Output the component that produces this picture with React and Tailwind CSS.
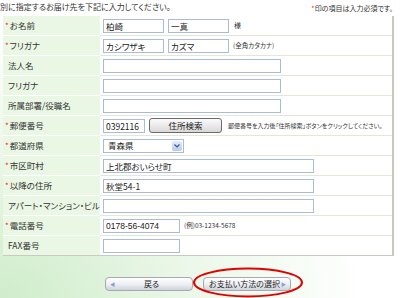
import React from 'react'

const jp = "font-['Noto_Sans_CJK_JP','Noto_Sans',sans-serif] [font-feature-settings:'palt']"

const Req = () => <span className="text-[#ff2020] text-[8px] leading-none mr-[1px]">*</span>

const Box = ({ w, value, className = '' }) => (
  <input
    readOnly
    value={value || ''}
    className={`h-[14px] border border-[#a9bcd6] bg-white px-[2px] text-[8.5px] text-[#222] outline-none ${w} ${className}`}
  />
)

const Row = ({ label, req, children, last }) => (
  <>
    <div
      className={`h-[20px] flex items-center pl-[2px] bg-[#e9f7e4] text-[8.5px] text-[#333] ${
        last ? 'border-b border-[#c9c9c0]' : 'border-b border-white'
      }`}
    >
      {req ? <Req /> : <span className="w-[3px]" />}
      <span className="whitespace-nowrap">{label}</span>
    </div>
    <div
      className={`h-[20px] flex items-center pl-[3px] bg-white ${
        last ? 'border-b border-[#c9c9c0]' : 'border-b border-[#e6e6d6]'
      }`}
    >
      {children}
    </div>
  </>
)

const Note = ({ children, className = '' }) => (
  <span className={`text-[6.5px] text-[#333] whitespace-nowrap ${className}`}>{children}</span>
)

const Btn = ({ children, dir }) => (
  <div className="w-[88px] h-[14px] rounded-[4px] border border-[#a8a8b0] bg-gradient-to-b from-[#ffffff] via-[#eef0f4] to-[#cfd3dc] flex items-center px-[4px] text-[8px] text-[#222]">
    {dir === 'left' && <span className="text-[5px] text-[#8aa0c8]">◀</span>}
    <span className="flex-1 text-center">{children}</span>
    {dir === 'right' && <span className="text-[5px] text-[#8aa0c8]">▶</span>}
  </div>
)

export default function App() {
  return (
    <div
      className={`relative w-[400px] h-[298px] overflow-hidden bg-[radial-gradient(ellipse_at_bottom_left,#cfeccb_0%,#eaf7e7_32%,#ffffff_65%)] ${jp}`}
    >
      {/* Header */}
      <div className="flex justify-between items-end h-[16px] pb-[3px] pr-[7px]">
        <span className="text-[8px] text-[#333]">別に指定するお届け先を下記に入力してください。</span>
        <span className="text-[7px] text-[#333]">
          <span className="text-[#ff2020]">*</span>印の項目は入力必須です。
        </span>
      </div>

      {/* Form table */}
      <div className="ml-[3px] w-[391px] grid grid-cols-[97px_1fr] border-r-2 border-[#c9c9c0]">
        <Row label="お名前" req>
          <Box w="w-[61px]" value="柏崎" />
          <Box w="w-[61px]" value="一真" className="ml-[4px]" />
          <Note className="ml-[5px] text-[7px]">様</Note>
        </Row>
        <Row label="フリガナ" req>
          <Box w="w-[61px]" value="カシワザキ" />
          <Box w="w-[61px]" value="カズマ" className="ml-[4px]" />
          <Note className="ml-[4px]">(全角カタカナ)</Note>
        </Row>
        <Row label="法人名">
          <Box w="w-[178px]" />
        </Row>
        <Row label="フリガナ">
          <Box w="w-[178px]" />
        </Row>
        <Row label="所属部署/役職名">
          <Box w="w-[178px]" />
        </Row>
        <Row label="郵便番号" req>
          <Box w="w-[42px]" value="0392116" />
          <div className="ml-[4px] w-[73px] h-[15px] rounded-[3px] border border-[#6b6b6b] bg-gradient-to-b from-[#fbfbfb] to-[#d9d9d9] flex items-center justify-center text-[8.5px] text-[#222]">
            住所検索
          </div>
          <span className="ml-[6px] text-[6px] text-[#333] whitespace-nowrap">
            郵便番号を入力後「住所検索」ボタンをクリックしてください。
          </span>
        </Row>
        <Row label="都道府県" req>
          <div className="w-[81px] h-[14px] border border-[#a9bcd6] bg-white flex items-center">
            <span className="flex-1 pl-[4px] text-[8.5px] text-[#222]">青森県</span>
            <span className="w-[10px] h-[10px] mr-[1px] rounded-[2px] bg-gradient-to-b from-[#e4ecf8] to-[#b8cbe8] flex items-center justify-center">
              <svg width="6" height="4" viewBox="0 0 6 4">
                <path d="M0.5 0.5 L3 3 L5.5 0.5" fill="none" stroke="#3a5a9a" strokeWidth="1.2" />
              </svg>
            </span>
          </div>
        </Row>
        <Row label="市区町村" req>
          <Box w="w-[211px]" value="上北郡おいらせ町" />
        </Row>
        <Row label="以降の住所" req>
          <Box w="w-[211px]" value="秋堂54-1" />
        </Row>
        <Row label="アパート・マンション・ビル">
          <Box w="w-[211px]" />
        </Row>
        <Row label="電話番号" req>
          <Box w="w-[77px]" value="0178-56-4074" className="font-['Liberation_Sans',sans-serif]" />
          <Note className="ml-[4px]">(例)03-1234-5678</Note>
        </Row>
        <Row label="FAX番号" last>
          <Box w="w-[77px]" />
        </Row>
      </div>

      {/* Buttons */}
      <div className="flex gap-[10px] ml-[105px] mt-[21px]">
        <Btn dir="left">戻る</Btn>
        <Btn dir="right">お支払い方法の選択</Btn>
      </div>

      {/* Highlight ellipse */}
      <svg className="absolute left-[192px] top-[267px]" width="112" height="31" viewBox="0 0 112 31">
        <ellipse cx="56" cy="15.5" rx="54" ry="14" fill="none" stroke="#e00000" strokeWidth="2" />
      </svg>
    </div>
  )
}
